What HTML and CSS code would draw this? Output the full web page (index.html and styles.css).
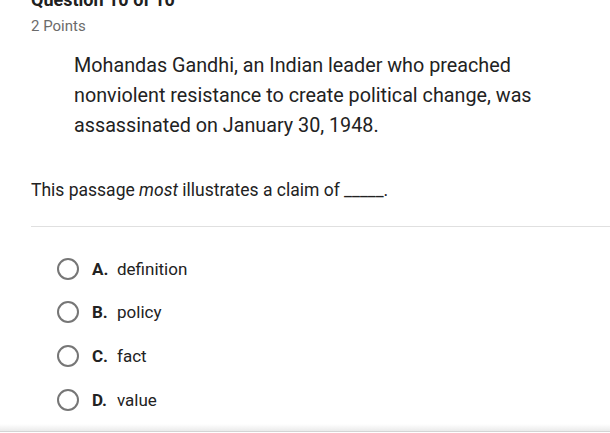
FILE: index.html
```html
<!DOCTYPE html>
<html lang="en">
<head>
<meta charset="utf-8">
<title>Question 10 of 10</title>
<link rel="stylesheet" href="styles.css">
</head>
<body>
<main class="page">
  <h1 class="title">Question 10 of 10</h1>
  <div class="points">2 Points</div>
  <p class="passage">Mohandas Gandhi, an Indian leader who preached<br>nonviolent resistance to create political change, was<br>assassinated on January 30, 1948.</p>
  <p class="prompt">This passage <em>most</em> illustrates a claim of _____.</p>
  <hr class="divider">
  <ul class="options">
    <li class="option"><span class="radio"></span><span class="letter">A.</span><span class="text">definition</span></li>
    <li class="option"><span class="radio"></span><span class="letter">B.</span><span class="text">policy</span></li>
    <li class="option"><span class="radio"></span><span class="letter">C.</span><span class="text">fact</span></li>
    <li class="option"><span class="radio"></span><span class="letter">D.</span><span class="text">value</span></li>
  </ul>
</main>
<div class="card-bottom"></div>
</body>
</html>
```

FILE: styles.css
```css
html, body {
  margin: 0;
  padding: 0;
  background: #ffffff;
  overflow: hidden;
}
body {
  font-family: Roboto, "Liberation Sans", Arial, sans-serif;
  color: #222222;
  height: 433px;
}
.page {
  padding-left: 31px;
}
.title {
  margin: -11px 0 0;
  font-size: 18px;
  line-height: 22px;
  font-weight: 700;
  color: #202020;
}
.points {
  margin-top: 5px;
  font-size: 15px;
  line-height: 20px;
  color: #6b6b6b;
}
.passage {
  margin: 15px 0 0;
  padding-left: 43px;
  font-size: 19.75px;
  line-height: 30px;
  color: #222222;
}
.prompt {
  margin: 36px 0 0;
  font-size: 17.5px;
  line-height: 26px;
  color: #222222;
}
.prompt em {
  font-style: italic;
}
.divider {
  margin: 23px 0 0;
  border: 0;
  border-top: 1px solid #e0e0e0;
  height: 0;
}
.options {
  list-style: none;
  margin: 20px 0 0;
  padding: 0;
}
.option {
  display: flex;
  align-items: center;
  height: 43.6px;
  font-size: 17px;
}
.radio {
  box-sizing: border-box;
  width: 22px;
  height: 22px;
  margin-left: 26px;
  margin-right: 13px;
  border: 2px solid #767676;
  border-radius: 50%;
  flex: none;
}
.letter {
  width: 25px;
  font-weight: 700;
  color: #222222;
}
.text {
  color: #222222;
}
.card-bottom {
  margin-top: 3px;
  height: 7px;
  background: linear-gradient(#ffffff, #ebebeb);
  border-bottom: 1px solid #d4d4d4;
}
```
